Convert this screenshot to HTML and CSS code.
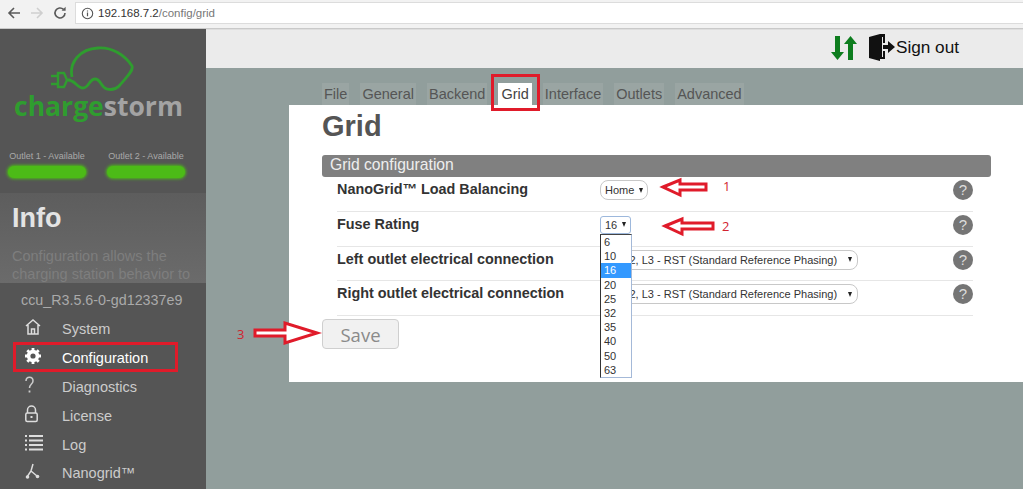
FILE: index.html
```html
<!DOCTYPE html>
<html lang="en">
<head>
<meta charset="utf-8">
<title>Grid</title>
<link rel="stylesheet" href="styles.css">
</head>
<body>
<div class="page">
  <header class="browser">
    <svg class="nav-ic" width="16" height="16" viewBox="0 0 16 16"><path d="M14 8H3M8 3L3 8l5 5" fill="none" stroke="#5a5a5a" stroke-width="1.6"/></svg>
    <svg class="nav-ic" width="16" height="16" viewBox="0 0 16 16"><path d="M2 8h11M8 3l5 5-5 5" fill="none" stroke="#cfcfcf" stroke-width="1.6"/></svg>
    <svg class="nav-ic" width="16" height="16" viewBox="0 0 16 16"><path d="M13 8a5 5 0 1 1-1.5-3.6" fill="none" stroke="#5a5a5a" stroke-width="1.6"/><path d="M13.6 1.8v4h-4z" fill="#5a5a5a"/></svg>
    <div class="url">
      <svg width="13" height="13" viewBox="0 0 13 13"><circle cx="6.5" cy="6.5" r="5.2" fill="none" stroke="#555" stroke-width="1.1"/><path d="M6.5 5.6v3.6M6.5 3.4v1.2" stroke="#555" stroke-width="1.2"/></svg>
      <span class="address"><span class="host">192.168.7.2</span><span class="path">/config/grid</span></span>
    </div>
  </header>
  <div class="app">
    <aside class="side">
      <div class="logo">
        <svg class="logo-mark" width="90" height="48" viewBox="0 0 90 48"><path d="M22 31C19 16 30 3 48 2c14-1 27 7 34 18 2 5-8 14-13 20-3 3-8 4-12 3-6-1-6-10-12-10s-6 9-12 9c-6 0-8-8-15-8" fill="none" stroke="#2f9d2f" stroke-width="2.8"/><path d="M1 30h8M1 38h8M8 27h6l3 7-3 7H8zM17 34h4" fill="none" stroke="#2f9d2f" stroke-width="2.4"/></svg>
        <div class="wordmark"><span class="charge">charge</span><span class="storm">storm</span></div>
      </div>
      <div class="outlets">
        <div class="outlet"><span>Outlet 1 - Available</span><i class="lamp"></i></div>
        <div class="outlet"><span>Outlet 2 - Available</span><i class="lamp"></i></div>
      </div>
      <section class="info">
        <h2>Info</h2>
        <p>Configuration allows the charging station behavior to</p>
      </section>
      <div class="version">ccu_R3.5.6-0-gd12337e9</div>
      <nav class="menu">
        <a class="item"><svg preserveAspectRatio="xMinYMid meet" viewBox="0 0 37 18"><path d="M1 8l7-6 7 6M3 7v9h10V7M6.5 16v-5h3v5" fill="none" stroke="#ddd" stroke-width="1.5"/></svg><span>System</span></a>
        <a class="item active"><svg preserveAspectRatio="xMinYMid meet" viewBox="0 0 37 18"><circle cx="8" cy="9" r="4.4" fill="none" stroke="#fff" stroke-width="3.6"/><path d="M8 1v3M8 14v3M0 9h3M13 9h3M2.3 3.3l2.2 2.2M11.5 12.5l2.2 2.2M2.3 14.7l2.2-2.2M11.5 5.5l2.2-2.2" stroke="#fff" stroke-width="2.8"/></svg><span>Configuration</span></a>
        <a class="item"><svg preserveAspectRatio="xMinYMid meet" viewBox="0 0 37 18"><path d="M1 5c0-5 7-5 7 0 0 3-3.5 3-3.5 7" fill="none" stroke="#ccc" stroke-width="1.5"/><path d="M4.5 14.5v2" stroke="#ccc" stroke-width="1.8"/></svg><span>Diagnostics</span></a>
        <a class="item"><svg preserveAspectRatio="xMinYMid meet" viewBox="0 0 37 18"><path d="M2.5 8V5a4 4 0 0 1 8 0v3" fill="none" stroke="#ddd" stroke-width="1.5"/><rect x="0.8" y="8" width="11.4" height="8.5" rx="1.5" fill="none" stroke="#ddd" stroke-width="1.5"/><rect x="5.5" y="11" width="2" height="2" fill="#ddd"/></svg><span>License</span></a>
        <a class="item"><svg preserveAspectRatio="xMinYMid meet" viewBox="0 0 37 18"><path d="M4 2h14M4 6.5h14M4 11h14M4 15.5h14" stroke="#ddd" stroke-width="1.8"/><path d="M0 2h2M0 6.5h2M0 11h2M0 15.5h2" stroke="#ddd" stroke-width="1.8"/></svg><span>Log</span></a>
        <a class="item"><svg preserveAspectRatio="xMinYMid meet" viewBox="0 0 37 18"><path d="M8 2L6 9l-4 6M6 9l6 5" fill="none" stroke="#ddd" stroke-width="1.5"/><circle cx="2.5" cy="15" r="1.8" fill="#ddd"/><circle cx="12.5" cy="14.5" r="1.8" fill="#ddd"/></svg><span>Nanogrid™</span></a>
      </nav>
    </aside>
    <main class="main">
      <div class="topbar">
        <svg width="26" height="26" viewBox="0 0 26 26"><path d="M4 1h5v16h4l-6.5 8L0 17h4zM17 25V9h-4l6.5-8L26 9h-4v16z" fill="#0d7d1e"/></svg>
        <svg class="door" width="26" height="27" viewBox="0 0 26 27"><path d="M0 3l11-3h5v9h-2V3h-1v20h1v-6h2v8h-5v2L0 24z" fill="#111"/><path d="M14 11h5V7l7 6-7 6v-4h-5z" fill="#111"/></svg>
        <span class="signout">Sign out</span>
      </div>
      <div class="tabs">
        <span class="tab">File</span><span class="tab">General</span><span class="tab">Backend</span><span class="tab current">Grid</span><span class="tab">Interface</span><span class="tab">Outlets</span><span class="tab">Advanced</span>
      </div>
      <div class="card">
        <h1>Grid</h1>
        <div class="form">
          <div class="bar">Grid configuration</div>
          <div class="row"><label>NanoGrid™ Load Balancing</label><span class="select">Home<b></b></span><i class="help">?</i></div>
          <div class="row"><label>Fuse Rating</label><span class="select focus">16<b></b></span><i class="help">?</i></div>
          <div class="row"><label>Left outlet electrical connection</label><span class="select wide">L1, L2, L3 - RST (Standard Reference Phasing)<b></b></span><i class="help">?</i></div>
          <div class="row"><label>Right outlet electrical connection</label><span class="select wide">L1, L2, L3 - RST (Standard Reference Phasing)<b></b></span><i class="help">?</i></div>
        </div>
        <button class="save" type="button">Save</button>
      </div>
    </main>
  </div>
  <ul class="dropdown">
    <li>6</li><li>10</li><li class="picked">16</li><li>20</li><li>25</li><li>32</li><li>35</li><li>40</li><li>50</li><li>63</li>
  </ul>
  <div class="mark mark-tab"></div>
  <div class="mark mark-nav"></div>
  <svg class="arrows" width="1023" height="489" viewBox="0 0 1023 489">
    <path d="M663 187l17-7v4h26v6h-26v5z"/>
    <path d="M665 226l17-7v4h31v6h-31v5z"/>
    <path d="M317 333l-32-10v7h-30v6h30v7z"/>
  </svg>
  <span class="num num1">1</span><span class="num num2">2</span><span class="num num3">3</span>
</div>
</body>
</html>
```
FILE: styles.css
```css
* { box-sizing: border-box; }
html, body { margin: 0; padding: 0; }
body { font-family: "Liberation Sans", Arial, sans-serif; }
.page { position: relative; width: 1023px; height: 489px; overflow: hidden; display: flex; flex-direction: column; background: #919e9c; }

.browser { height: 29px; flex: none; display: flex; align-items: center; padding: 0 0 2px 6px; gap: 7px; background: #f2f2f2; border-bottom: 1px solid #c9c9c9; }
.nav-ic { flex: none; }
.url { flex: 1; height: 22px; display: flex; align-items: center; gap: 4px; padding-left: 5px; background: #fff; border: 1px solid #dcdcdc; border-right: 0; font-size: 11.5px; white-space: nowrap; }
.host { color: #333; }
.path { color: #777; }

.app { flex: 1; display: flex; min-height: 0; }
.side { width: 206px; flex: none; background: #555; color: #ccc; overflow: hidden; }
.logo { height: 103px; padding-top: 17px; display: flex; flex-direction: column; align-items: center; }
.logo-mark { margin-right: 16px; flex: none; display: block; }
.wordmark { font: 700 26.5px/26px "Open Sans", sans-serif; margin-top: -1px; margin-right: 9px; white-space: nowrap; }
.charge { color: #2f9d2f; }
.storm { color: #a3a3a3; }

.outlets { display: flex; gap: 19px; padding: 19px 0 0 7px; height: 61px; }
.outlet { width: 80px; display: flex; flex-direction: column; align-items: center; font-size: 9px; line-height: 11px; color: #a9a9a9; white-space: nowrap; }
.lamp { display: block; width: 78px; height: 12px; margin-top: 4px; border-radius: 7px; background: #4cbb17; box-shadow: 0 0 3px 1px #4cbb17; filter: blur(0.6px); }

.info { height: 90px; padding: 10px 12px 0; overflow: hidden; background: linear-gradient(#5d5d5d, #6b6b6b); }
.info h2 { margin: 0; font-size: 27px; line-height: 30px; font-weight: 700; color: #e4e4e4; }
.info p { margin: 14px 0 0; font-size: 14.5px; line-height: 18px; color: #7e7e7e; }

.version { padding: 9px 0 0 21px; font-size: 14.3px; line-height: 17px; color: #aaa; white-space: nowrap; }
.menu { display: flex; flex-direction: column; padding-top: 6px; }
.item { height: 28.8px; display: flex; align-items: center; padding-left: 25px; font-size: 14.5px; color: #ccc; }
.item svg { width: 37px; height: 18px; margin-top: -4px; flex: none; }
.item.active { color: #fff; }

.main { flex: 1; min-width: 0; }
.topbar { height: 39px; display: flex; justify-content: flex-end; align-items: center; padding: 0 64px 3px 0; background: #ebebeb; border-top: 1px solid #dedede; }
.door { margin-left: 12px; }
.signout { margin-left: 1px; font-size: 17.2px; color: #111; }

.tabs { display: flex; gap: 11px; padding: 15px 0 0 116px; height: 37px; }
.tab { height: 22px; padding: 0 2px; font-size: 14.5px; line-height: 22px; color: #555; background: #9aa5a3; }
.tab.current { padding: 0 3px; background: #fff; color: #444; }

.card { margin-left: 83px; height: 277px; padding-left: 33px; background: #fff; }
.card h1 { margin: 0; height: 50px; font-size: 29px; line-height: 42px; font-weight: 700; color: #555; }
.form { width: 669px; }
.bar { height: 22px; padding-left: 8px; font-size: 15.7px; line-height: 20px; color: #eee; background: #808080; border-radius: 3px; }
.row { position: relative; width: 636px; margin-left: 15px; height: 34.8px; display: flex; align-items: flex-start; padding-top: 4px; border-bottom: 1px solid #e6e6e6; }
.row label { width: 263px; flex: none; font-size: 14.4px; line-height: 17px; font-weight: 700; color: #333; }
.select { display: inline-flex; align-items: center; height: 20px; margin-top: -1px; padding: 0 4px; border: 1px solid #c8c8c8; border-radius: 8px; font-size: 11px; color: #333; background: #fff; white-space: nowrap; }
.select b { flex: none; width: 0; height: 0; margin-left: 5px; border-left: 2.5px solid transparent; border-right: 2.5px solid transparent; border-top: 5px solid #222; }
.select.focus { height: 18px; margin-top: 0; border-color: #9db8dc; border-radius: 3px; }
.select.wide { width: 258px; justify-content: space-between; padding-right: 5px; }
.help { position: absolute; right: 0; top: 3px; width: 20px; height: 20px; border-radius: 50%; background: #757575; color: #ddd; font-style: normal; font-size: 15px; line-height: 20px; text-align: center; }
.save { display: block; width: 77px; height: 30px; margin-top: 3px; padding: 0; background: #f1f1f1; border: 1px solid #cfcfcf; border-radius: 4px; font: 18.5px "Open Sans", sans-serif; color: #8a8a8a; }

.dropdown { position: absolute; left: 600px; top: 234px; width: 32px; height: 144px; margin: 0; padding: 0; list-style: none; background: #fff; border: 1px solid #a4b9d8; border-top-color: #444; border-left-color: #333; font-size: 11px; line-height: 14.2px; color: #333; }
.dropdown li { padding-left: 3px; }
.dropdown .picked { background: #3399ff; color: #fff; }

.mark { position: absolute; border: 3px solid #e01b2a; }
.mark-tab { left: 491px; top: 74px; width: 49px; height: 37px; }
.mark-nav { left: 13px; top: 342px; width: 165px; height: 30px; }
.arrows { position: absolute; left: 0; top: 0; pointer-events: none; }
.arrows path { fill: #fff; stroke: #e01b2a; stroke-width: 3; }
.num { position: absolute; font: 13px "Open Sans", sans-serif; color: #d2232f; }
.num1 { left: 723px; top: 177px; }
.num2 { left: 722px; top: 217px; }
.num3 { left: 237px; top: 325px; }
```
